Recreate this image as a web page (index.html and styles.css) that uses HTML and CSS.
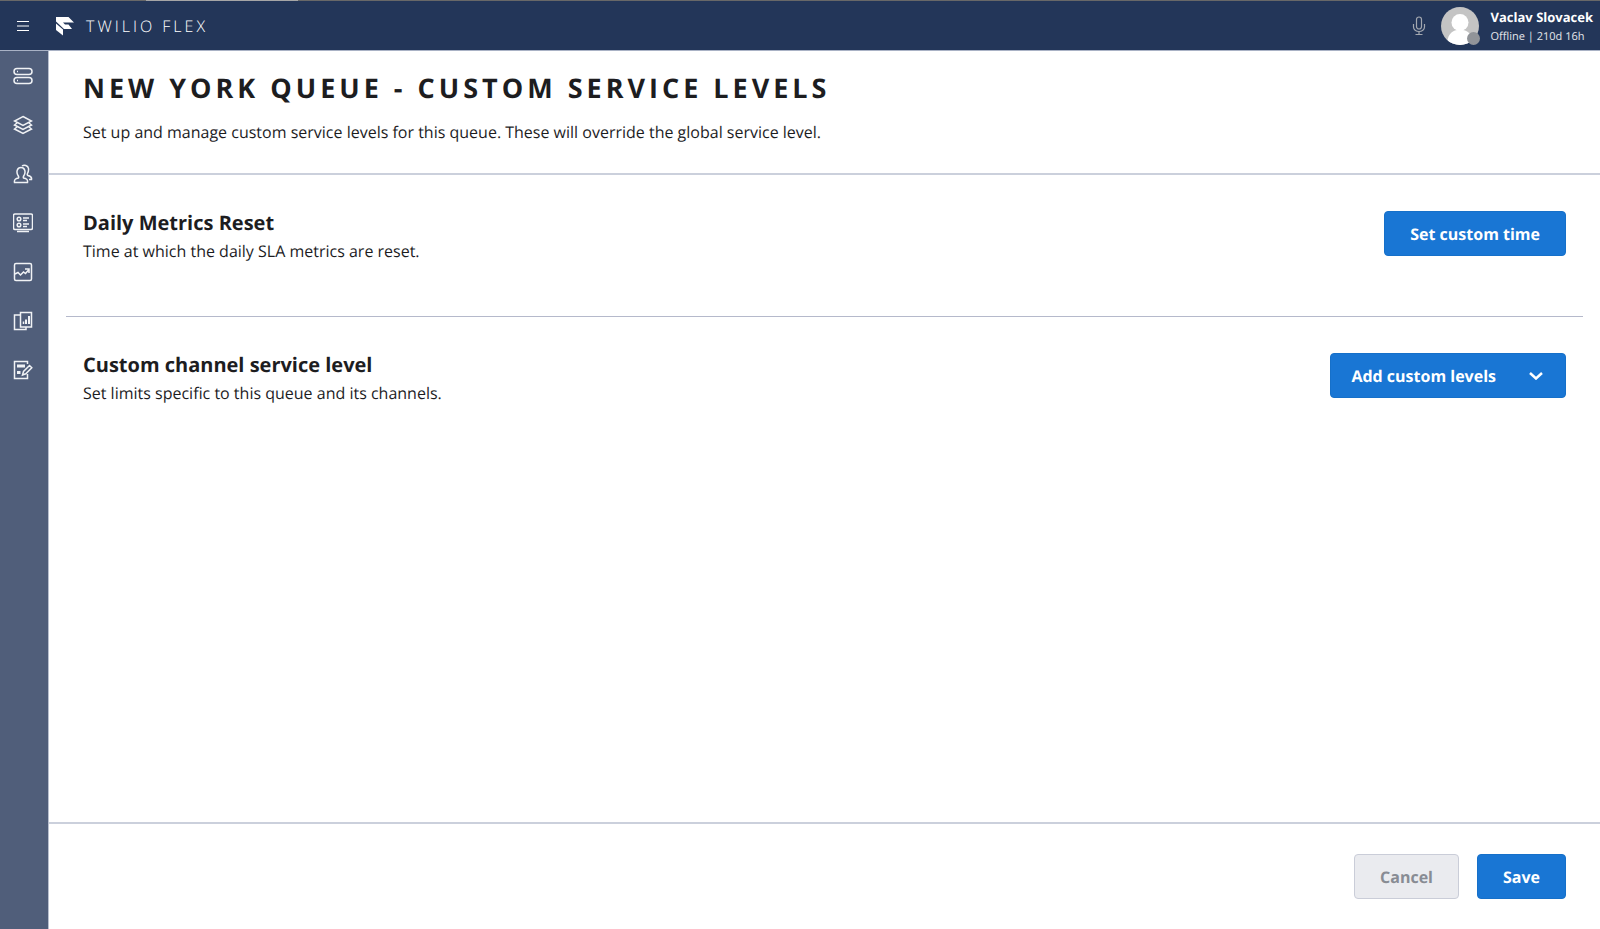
FILE: index.html
```html
<!DOCTYPE html>
<html lang="en">
<head>
  <title>Custom service levels — Twilio Flex</title>
  <meta charset="utf-8">
  <meta name="viewport" content="width=device-width, initial-scale=1">
  <link rel="stylesheet" href="styles.css">
</head>
<body>
  <header class="topbar">
    <button type="button" class="menu-button" aria-label="Menu">
      <svg width="12" height="12" viewBox="0 0 12 12" stroke="currentColor"><path d="M0 1.500h12M0 6h12M0 10.500h12"/></svg>
    </button>
    <a href="#" class="brand">
      <svg width="20" height="20" viewBox="0 0 20 20" fill="currentColor">
        <path d="M1 1h12.500L19 6.500H8l2 2h3.500l3.500 4.500H9L1 5.500z"/>
        <path d="M1 7.500l7 6v6L1 14z"/>
      </svg>
      <span>TWILIO FLEX</span>
    </a>
    <div class="user">
      <button type="button" class="mic" aria-label="Microphone">
        <svg width="14" height="20" viewBox="0 0 14 20" fill="none" stroke="currentColor" stroke-width="1.200"><rect x="4.500" y="1" width="5" height="12" rx="2.500"/><path d="M1.500 8v3a5.500 4.500 0 0 0 11 0V8M7 15.500V18M3.500 18.500h7"/></svg>
      </button>
      <div class="avatar">
        <svg width="38" height="38" viewBox="0 0 38 38">
          <clipPath id="round"><circle cx="19" cy="19" r="19"/></clipPath>
          <g clip-path="url(#round)">
            <path fill="#c4c4c4" d="M0 0h38v38H0z"/>
            <circle cx="19" cy="15.500" r="8.500" fill="#fff"/>
            <path fill="#fff" d="M6 38c0-9 4-14 10-15h6c6 1 10 6 10 15z"/>
          </g>
        </svg>
        <span class="status"></span>
      </div>
      <div class="user-text">
        <p class="user-name">Vaclav Slovacek</p>
        <p class="user-status">Offline | 210d 16h</p>
      </div>
    </div>
  </header>
  <div class="layout">
    <nav class="sidebar">
      <a href="#" aria-label="Agent desktop">
        <svg viewBox="0 0 20 20"><rect x="1" y="2.500" width="18" height="6" rx="3"/><rect x="1" y="11.500" width="18" height="6" rx="3"/><path d="M4 5.500h1M4 14.500h1"/></svg>
      </a>
      <a href="#" aria-label="Teams">
        <svg viewBox="0 0 20 20"><path d="M10 1.500l8.500 4.500-8.500 4.500L1.500 6zM4 8L1.500 10l8.500 4.500 8.500-4.500L16 8M4 12l-2.500 2 8.500 4.500 8.500-4.500L16 12"/></svg>
      </a>
      <a href="#" aria-label="Agents">
        <svg viewBox="0 0 20 20"><path d="M1.500 18.500c-.5-3 1-4 4-4.500.500-1 .3-1.500-.5-2.500C3 8 4 3.500 8 3.500s5 4.500 3 8c-.8 1-1 1.500-.5 2.500 3 .5 4.500 1.500 4 4.500zM9 2c2-1.500 6-.8 6.500 2.500.3 2.500-.2 3.500-1 5-.5 1-.3 1.500.5 2 2.500.5 4 1.500 3.500 4h-2.500"/></svg>
      </a>
      <a href="#" aria-label="Queues">
        <svg viewBox="0 0 20 20"><rect x=".5" y="1" width="19" height="15.500" rx="1.500"/><circle cx="6" cy="6" r="1.800"/><circle cx="6" cy="12" r="1.800"/><path d="M10 5h6M10 7.500h4M10 11h6M10 13.500h4M4 18.500h12"/></svg>
      </a>
      <a href="#" aria-label="Insights">
        <svg viewBox="0 0 20 20"><rect x="1.500" y="1.500" width="17" height="17" rx="1.500"/><path d="M2 12l3-1.500L7.500 13l3-3 2 1.500L16 7.500M12 7h4v4"/></svg>
      </a>
      <a href="#" aria-label="Dashboards">
        <svg viewBox="0 0 20 20"><path d="M7.500 1.500h11v14.500h-11zM7.500 4h-6v14.500H13V16M10.500 13v-2.500"/><path stroke-width="2" d="M13 13V8.500M16 13V5"/></svg>
      </a>
      <a href="#" aria-label="Questionnaires">
        <svg viewBox="0 0 20 20"><path d="M14.500 4V1.500h-13v17h13V14M9.500 15l1-3.500 6-6 2.300 2.300-6 6z"/><path class="solid" d="M4 4.500h8v3H4zM4 11h3.500v3H4z"/></svg>
      </a>
    </nav>
    <main class="page">
      <div class="page-header">
        <h1>New York Queue - Custom service levels</h1>
        <p>Set up and manage custom service levels for this queue. These will override the global service level.</p>
      </div>
      <div class="sections">
        <section class="section">
          <div>
            <h2>Daily Metrics Reset</h2>
            <p>Time at which the daily SLA metrics are reset.</p>
          </div>
          <button type="button" class="button">Set custom time</button>
        </section>
        <section class="section">
          <div>
            <h2>Custom channel service level</h2>
            <p>Set limits specific to this queue and its channels.</p>
          </div>
          <button type="button" class="button button-menu" aria-haspopup="menu">
            Add custom levels
            <svg width="14" height="8" viewBox="0 0 14 8" fill="none" stroke="currentColor" stroke-width="2.500"><path d="M1 1l6 5.500L13 1"/></svg>
          </button>
        </section>
      </div>
      <footer class="page-footer">
        <button type="button" class="button button-disabled" disabled>Cancel</button>
        <button type="button" class="button">Save</button>
      </footer>
    </main>
  </div>
</body>
</html>
```
FILE: styles.css
```css
*, *::before, *::after {
  margin: 0;
  padding: 0;
  box-sizing: border-box;
}

body {
  min-height: 100vh;
  display: flex;
  flex-direction: column;
  background-color: #FFFFFF;
  color: #1D1D1F;
  font-family: "Open Sans", sans-serif;
  font-size: 16px;
  line-height: 24px;
  text-rendering: geometricPrecision;
}

button {
  border: none;
  background-color: transparent;
  color: inherit;
  font-family: inherit;
  text-rendering: inherit;
  cursor: pointer;
}

svg {
  display: block;
}

.topbar {
  position: relative;
  height: 51px;
  padding-right: 7px;
  display: flex;
  align-items: center;
  border-top: 1px solid #686868;
  border-bottom: 1px solid #A9B2C5;
  background-color: #233659;
  color: #FFFFFF;
}

/* light part of the line above the bar */
.topbar::before {
  content: "";
  position: absolute;
  top: -1px;
  left: 146px;
  width: 152px;
  height: 1px;
  background-color: #A6A6A6;
}

.menu-button {
  width: 46px;
  height: 48px;
  display: flex;
  align-items: center;
  justify-content: center;
}

.brand {
  margin-left: 9px;
  display: flex;
  align-items: center;
  gap: 11px;
  color: inherit;
  font-size: 16px;
  font-weight: 300;
  letter-spacing: 3px;
  text-decoration: none;
}

.user {
  margin-left: auto;
  display: flex;
  align-items: center;
}

.mic {
  margin-right: 15px;
  color: #A3A8B0;
}

.avatar {
  position: relative;
  margin-right: 12px;
}

.status {
  position: absolute;
  right: -1px;
  bottom: 0;
  width: 13px;
  height: 13px;
  border-radius: 50%;
  background-color: #919499;
}

.user-text {
  padding-top: 2px;
}

.user-name {
  font-size: 13px;
  font-weight: 700;
  line-height: 20px;
}

.user-status {
  color: #E3E6EB;
  font-size: 11px;
  line-height: 20px;
}

.layout {
  flex: 1;
  display: flex;
}

.sidebar {
  width: 49px;
  padding-right: 2px;
  border-right: 1px solid #B9C0CF;
  background-color: #505E7A;
}

.sidebar a {
  height: 49px;
  display: flex;
  align-items: center;
  justify-content: center;
  color: #F0F2F5;
}

.sidebar svg {
  width: 20px;
  height: 20px;
  fill: none;
  stroke: currentColor;
  stroke-width: 1.5;
}

.sidebar .solid {
  fill: currentColor;
  stroke: none;
}

.page {
  flex: 1;
  display: flex;
  flex-direction: column;
}

.page-header {
  padding: 16px 34px 29px;
  border-bottom: 2px solid #CBD0DC;
}

h1 {
  margin-bottom: 11px;
  font-size: 27px;
  font-weight: 700;
  line-height: 42px;
  letter-spacing: 4px;
  text-transform: uppercase;
}

h2 {
  margin-bottom: 1px;
  font-size: 20px;
  font-weight: 700;
  line-height: 30px;
}

.sections {
  flex: 1;
  padding: 0 17px;
}

.section {
  padding: 33px 17px 53px;
  display: flex;
  align-items: flex-start;
  justify-content: space-between;
}

.section + .section {
  border-top: 1px solid #B5B9CB;
}

.section .button {
  margin-top: 3px;
}

.button {
  min-height: 45px;
  padding: 0 25px;
  border: 1px solid #1670C9;
  border-radius: 4px;
  background-color: #1976D4;
  color: #FFFFFF;
  font-size: 16px;
  font-weight: 700;
}

.button-menu {
  padding: 0 22px 0 20px;
  display: flex;
  align-items: center;
  gap: 33px;
}

.button-disabled {
  border-color: #CACDD8;
  background-color: #EAEBEF;
  color: #888C94;
  cursor: default;
}

.page-footer {
  padding: 30px 34px;
  display: flex;
  justify-content: flex-end;
  gap: 18px;
  border-top: 2px solid #CBD0DC;
}
```
